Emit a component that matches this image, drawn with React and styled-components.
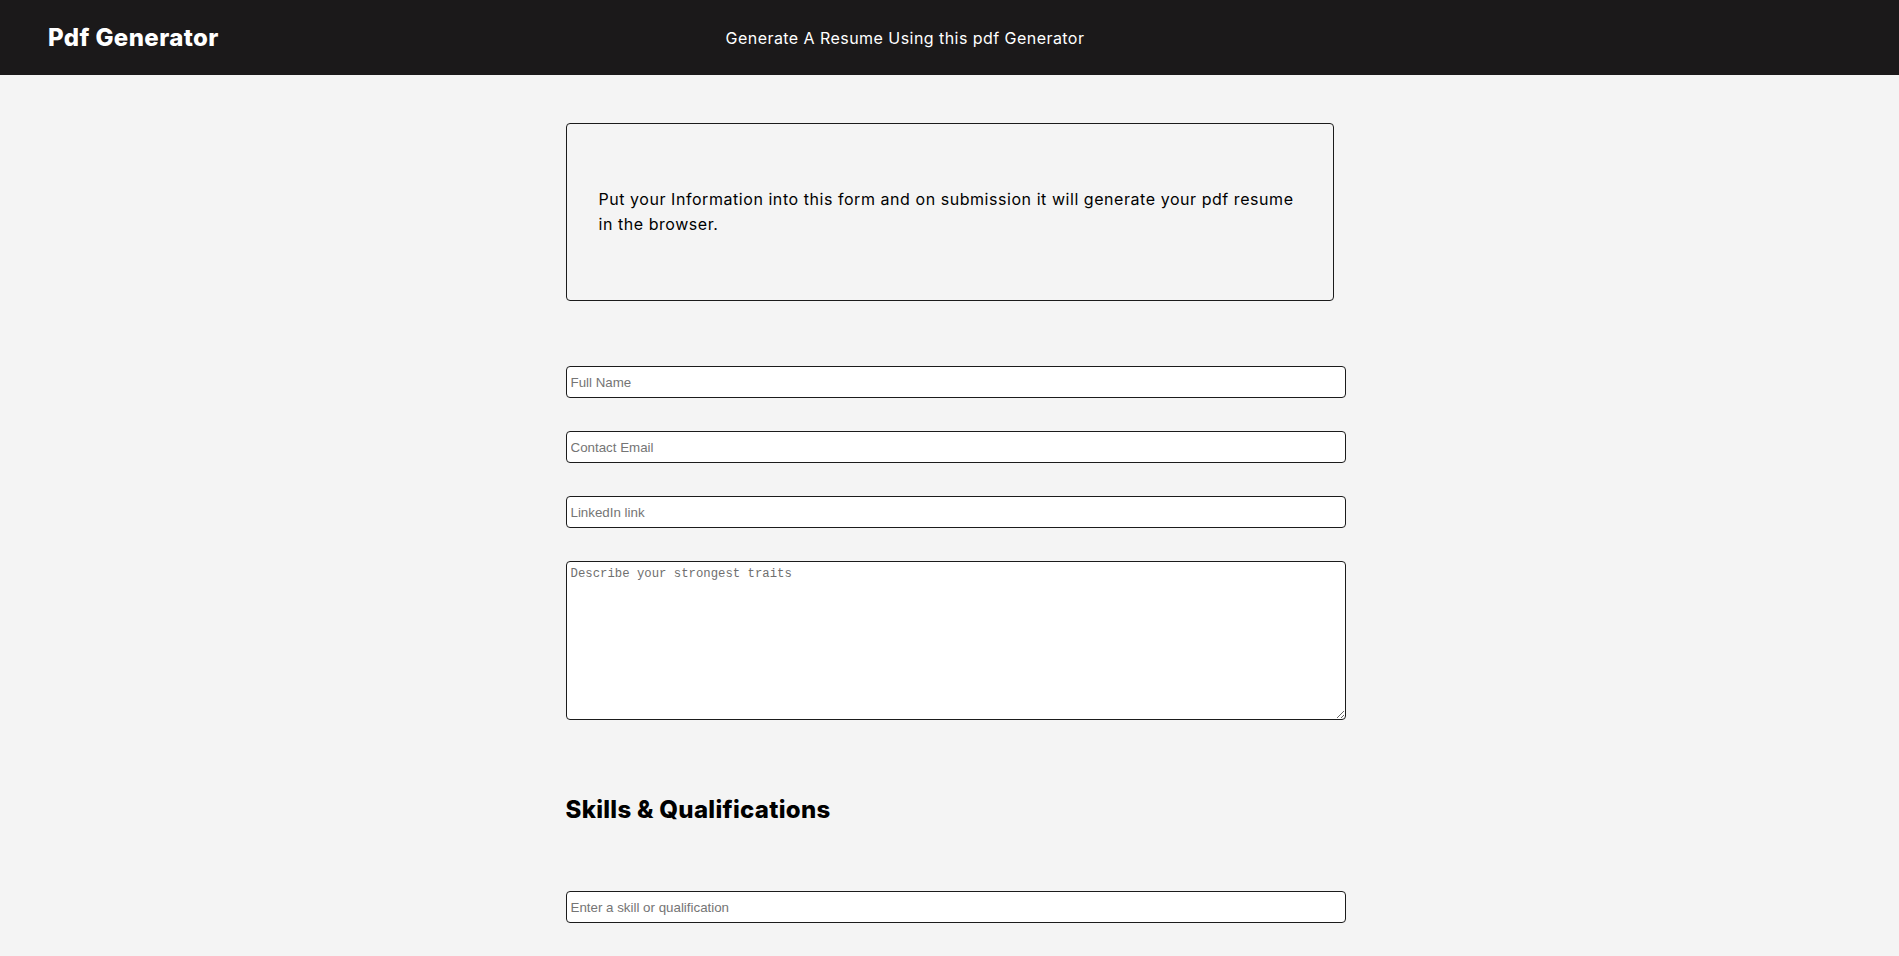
import React, { useState } from 'react';
import styled, { createGlobalStyle } from 'styled-components';

const GlobalStyle = createGlobalStyle`
	* {
		box-sizing: border-box;
	}
	body {
		margin: 0;
		background-color: #f4f4f4;
		font-family: 'Inter', 'Noto Sans', sans-serif;
		color: #000000;
	}
`;

const App = () => {
	const [form, setForm] = useState({ name: '', email: '', linkedin: '', traits: '', skill: '' });

	const onChange = e => {
		setForm({ ...form, [e.target.name]: e.target.value });
	};

	return (
		<React.Fragment>
			<GlobalStyle />
			<Header>
				<Logo>Pdf Generator</Logo>
				<Tagline>Generate A Resume Using this pdf Generator</Tagline>
			</Header>
			<Main>
				<InfoCard>
					<p>
						Put your Information into this form and on submission it will generate your pdf resume in the
						browser.
					</p>
				</InfoCard>
				<Form onSubmit={e => e.preventDefault()}>
					<Field name="name" placeholder="Full Name" value={form.name} onChange={onChange} />
					<Field name="email" placeholder="Contact Email" value={form.email} onChange={onChange} />
					<Field name="linkedin" placeholder="LinkedIn link" value={form.linkedin} onChange={onChange} />
					<Traits
						name="traits"
						placeholder="Describe your strongest traits"
						value={form.traits}
						onChange={onChange}
					/>
				</Form>
				<SectionTitle>Skills &amp; Qualifications</SectionTitle>
				<Field name="skill" placeholder="Enter a skill or qualification" value={form.skill} onChange={onChange} />
			</Main>
		</React.Fragment>
	);
};
export default App;

const Header = styled.header`
	display: flex;
	align-items: center;
	height: 75px;
	padding: 0 48px;
	background-color: #1b191a;
	color: #ffffff;
`;

const Logo = styled.h1`
	flex: 0 0 612px;
	margin: 0;
	font-size: 24px;
	font-weight: 800;
	letter-spacing: 0.4px;
`;

const Tagline = styled.div`
	flex: 0 0 490px;
	text-align: center;
	font-size: 16px;
	font-weight: 400;
	letter-spacing: 0.45px;
`;

const Main = styled.main`
	width: 768px;
	margin: 48px auto 0;
`;

const InfoCard = styled.div`
	border: 1px solid #1b1b1b;
	border-radius: 4px;
	padding: 47px 32px;
	& p {
		margin: 16px 0;
		font-size: 16px;
		line-height: 25px;
		letter-spacing: 0.55px;
	}
`;

const Form = styled.form`
	display: flex;
	flex-direction: column;
	gap: 33px;
	margin-top: 65px;
`;

const Field = styled.input`
	display: block;
	width: calc(100% + 12px);
	height: 32px;
	padding: 1px 4px;
	border: 1px solid #1b1b1b;
	border-radius: 4px;
	background-color: #ffffff;
	font-family: 'Liberation Sans', Arial, sans-serif;
	font-size: 13.33px;
	outline: none;
	&::placeholder {
		color: #757575;
	}
`;

const Traits = styled.textarea`
	display: block;
	width: calc(100% + 12px);
	height: 159px;
	padding: 5px 4px;
	border: 1px solid #1b1b1b;
	border-radius: 4px;
	background-color: #ffffff;
	font-family: 'Liberation Mono', monospace;
	font-size: 12.3px;
	outline: none;
	&::placeholder {
		color: #6f6f6f;
	}
`;

const SectionTitle = styled.h2`
	margin: 72px 0 63px;
	font-size: 24px;
	line-height: 36px;
	font-weight: 800;
	letter-spacing: 0.3px;
`;
